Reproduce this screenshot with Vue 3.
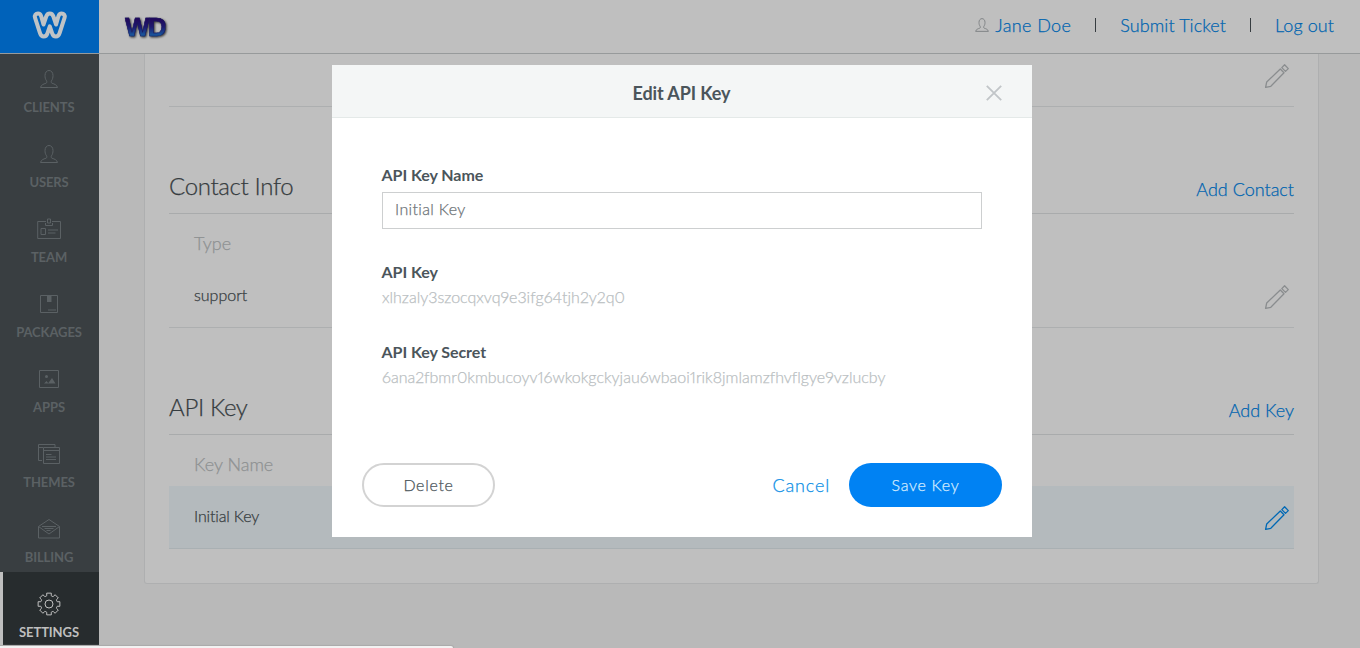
<script setup>
import { ref } from 'vue'

const keyName = ref('Initial Key')

const gear = Array.from({ length: 8 }, (_, i) => {
  const at = (r, deg) => {
    const a = ((i * 45 + deg) * Math.PI) / 180
    return `${(12 + r * Math.sin(a)).toFixed(2)} ${(12 - r * Math.cos(a)).toFixed(2)}`
  }
  return `${i ? 'L' : 'M'}${at(8.6, -15)}L${at(11.1, -12)}L${at(11.1, 12)}L${at(8.6, 15)}A2.6 2.6 0 0 0 ${at(8.6, 30)}`
}).join('') + 'Z'

const person =
  'M3.5 20.5h17c-.5-2.500-3-3.500-5.400-4.200-1-.4-1.200-1.500-.6-2.500C15.700 12 16 10.500 16 8.500c0-3-1.700-5-4-5S8 5.500 8 8.500c0 2 .3 3.500 1.500 5.300.6 1 .4 2.100-.6 2.500-2.400.7-4.900 1.700-5.400 4.200z'

const items = [
  { label: 'CLIENTS', paths: [person] },
  { label: 'USERS', paths: [person] },
  {
    label: 'TEAM',
    paths: [
      'M9 4.500H.7v17h22.800v-17H15M10.500 2h3v4h-3zM8.500 6v2.500h7V6M4 11.500h4.500v6H4zM11 13h10M11 16h7.500',
    ],
  },
  { label: 'PACKAGES', paths: ['M3.500 3.500h17v17h-17zM11 18h8'], fill: 'M10 3.500h4.500V10H10z' },
  {
    label: 'APPS',
    paths: ['M2.500 3.500h19v17h-19z'],
    fill: 'M7 16.500l2.500-2.500 2 2.500zM11 16.500l4-5.500 3.500 5.500zM8 9.500a1.500 1.500 0 1 0 3 0a1.500 1.500 0 1 0-3 0z',
  },
  {
    label: 'THEMES',
    paths: ['M5 18.500H1.500v-16h16.500V5M1.500 5.500H6M6.500 5.500h16v16h-16zM6.500 8.500h16M9 12.500h5.500M9 15h10M9 17.500h10'],
  },
  {
    label: 'BILLING',
    paths: ['M1.500 9.500L12 2.500l10.500 7V21h-21zM1.500 9.500L12 17l10.500-7.500M5 9.500h14M7.500 11.500h9M9.500 13.500h4'],
  },
  { label: 'SETTINGS', active: true, paths: [gear, 'M8 12a4 4 0 1 0 8 0a4 4 0 1 0-8 0z'] },
]

const pencil =
  'M.6 23.400L1.700 18 15.300 5 19 8.800 5.800 22.300zM16.800 3.600L19.600.7l3.700 3.900-2.800 2.800z'
</script>

<template>
  <div class="app">
    <header class="top">
      <div class="brand">
        <svg width="38" height="30" viewBox="0 0 38 30">
          <path
            d="M18.800 3.500c-2 0-3 1.200-3.600 3l-2.700 8-2.300-8.200C9.600 4.500 8.700 3.500 7 3.500c-2.300 0-3.700 1.900-3 4.100l5 15.600c.7 2.200 1.800 3.300 3.700 3.300s3.100-1.100 3.700-3.100l2.400-7 2.400 7c.6 2 1.800 3.100 3.700 3.100s3-1.100 3.700-3.300l5-15.600c.7-2.200-.7-4.100-3-4.100-1.700 0-2.600 1-3.200 2.800l-2.300 8.200-2.700-8c-.6-1.800-1.600-3-3.600-3z"
          />
        </svg>
      </div>
      <div class="wd">WD</div>
      <div class="links">
        <svg class="me" width="18" height="18" viewBox="0 0 24 24"><path :d="person" /></svg>
        <a class="jane">Jane Doe</a>
        <i class="bar"></i>
        <a>Submit Ticket</a>
        <i class="bar"></i>
        <a>Log out</a>
      </div>
    </header>

    <div class="body">
      <nav class="side">
        <div v-for="it in items" :key="it.label" class="item" :class="{ active: it.active }">
          <svg width="24" height="24" viewBox="0 0 24 24">
            <path v-for="p in it.paths" :key="p" :d="p" />
            <path v-if="it.fill" class="solid" :d="it.fill" />
          </svg>
          <span>{{ it.label }}</span>
        </div>
      </nav>

      <main class="main">
        <div class="card">
          <div class="row first">
            <svg class="pen" width="24" height="24" viewBox="0 0 24 24"><path :d="pencil" /></svg>
          </div>
          <div class="section">
            <h2>Contact Info</h2>
            <a>Add Contact</a>
          </div>
          <div class="thead"><span>Type</span></div>
          <div class="row">
            <span>support</span>
            <svg class="pen" width="24" height="24" viewBox="0 0 24 24"><path :d="pencil" /></svg>
          </div>
          <div class="section">
            <h2>API Key</h2>
            <a>Add Key</a>
          </div>
          <div class="thead"><span>Key Name</span></div>
          <div class="row hot">
            <span>Initial Key</span>
            <svg class="pen" width="24" height="24" viewBox="0 0 24 24"><path :d="pencil" /></svg>
          </div>
        </div>
      </main>
    </div>

    <div class="status"></div>

    <section class="modal">
      <div class="modal-head">
        <h3>Edit API Key</h3>
        <svg class="close" width="16" height="16" viewBox="0 0 16 16"><path d="M.8.800l14.400 14.400M15.200.8L.8 15.200" /></svg>
      </div>
      <div class="modal-body">
        <label>API Key Name</label>
        <input v-model="keyName" type="text" />
        <label>API Key</label>
        <p>xlhzaly3szocqxvq9e3ifg64tjh2y2q0</p>
        <label>API Key Secret</label>
        <p>6ana2fbmr0kmbucoyv16wkokgckyjau6wbaoi1rik8jmlamzfhvflgye9vzlucby</p>
      </div>
      <div class="modal-foot">
        <button class="delete">Delete</button>
        <a class="cancel">Cancel</a>
        <button class="save">Save Key</button>
      </div>
    </section>
  </div>
</template>

<style>
body {
  margin: 0;
  overflow: hidden;
}
</style>

<style scoped>
* {
  box-sizing: border-box;
}
.app {
  position: relative;
  width: 1360px;
  height: 648px;
  overflow: hidden;
  background: #b9b9b9;
  color: #363c40;
  font-family: Lato, 'Open Sans', sans-serif;
  font-weight: 300;
  font-variant-ligatures: none;
  font-variant-numeric: proportional-nums;
  -webkit-text-stroke: 0.250px currentColor;
  white-space: nowrap;
}
svg {
  display: block;
  flex: none;
  fill: none;
  overflow: visible;
}
.top {
  position: relative;
  z-index: 1;
  display: flex;
  align-items: center;
  height: 54px;
  background: #bfbfbf;
  border-bottom: 1px solid #979a9b;
}
.brand {
  display: flex;
  justify-content: center;
  width: 99px;
  height: 53px;
  padding-top: 10px;
  background: #0062ba;
}
.brand svg {
  margin-left: 1px;
}
.brand path {
  stroke: #bfc3c6;
  stroke-width: 4;
  stroke-linejoin: round;
}
.wd {
  margin-left: 26px;
  font: bold 26px/30px 'Liberation Sans', sans-serif;
  letter-spacing: -1.500px;
  color: transparent;
  background: linear-gradient(#210a5c 25%, #1e1a70 50%, #1668a8 85%);
  background-clip: text;
  -webkit-text-stroke: 0.500px #1a1560;
  filter: drop-shadow(1px 1px 1px #333);
}
.links {
  display: flex;
  align-items: center;
  margin-left: auto;
  margin-right: 26px;
  margin-bottom: 4px;
  height: 24px;
  font-size: 18px;
  line-height: 24px;
  letter-spacing: 0.080px;
  color: #0064b0;
}
.jane {
  letter-spacing: 0.400px;
}
.me path {
  stroke: #7f8385;
  stroke-width: 1.300;
}
.me {
  margin-right: 4px;
}
.bar {
  width: 1px;
  height: 14px;
  margin: 0 24px;
  background: #363c40;
}
.body {
  display: flex;
  height: 594px;
}
.side {
  width: 99px;
  height: 598px;
  margin-top: -7px;
  background: #393e41;
}
.item {
  display: flex;
  flex-direction: column;
  align-items: center;
  height: 75px;
  padding: 20px 1px 0 0;
  color: #5b6164;
}
.item svg {
  margin-left: -1px;
}
.item path {
  stroke: #5b6164;
  stroke-width: 1;
}
.item .solid {
  fill: #5b6164;
  stroke: none;
}
.item span {
  margin-top: 8px;
  font-size: 13px;
  line-height: 16px;
  font-weight: 700;
  letter-spacing: -0.100px;
  -webkit-text-stroke: 0;
}
.item.active {
  height: 73px;
  background: #272c2e;
  border-left: 3px solid #bfbfbf;
  padding-right: 4px;
  color: #bfbfbf;
}
.item.active path {
  stroke: #bfbfbf;
}
.main {
  flex: 1;
  padding: 0 41px 0 45px;
}
.card {
  height: 530px;
  padding: 0 24px;
  background: #bfbfbf;
  border: 1px solid #aeafb0;
  border-top: 0;
  border-radius: 0 0 3px 3px;
}
.row {
  display: flex;
  align-items: center;
  justify-content: space-between;
  height: 63px;
  padding: 1px 5px 0 25px;
  border-bottom: 1px solid #adafb0;
  font-size: 16px;
}
.row span {
  margin-bottom: 4px;
}
.hot span {
  letter-spacing: -0.150px;
}
.row.first {
  height: 53px;
  padding-bottom: 9px;
}
.first .pen {
  margin-left: auto;
}
.row.hot {
  background: #b4babd;
  border-color: #a9b0b3;
}
.pen path {
  stroke: #8a8d8f;
  stroke-width: 1.300;
  stroke-linejoin: round;
}
.hot .pen path {
  stroke: #0069b5;
}
.section {
  display: flex;
  align-items: flex-end;
  justify-content: space-between;
  height: 107px;
  border-bottom: 1px solid #a9abac;
}
h2 {
  margin: 0 0 12px;
  font-size: 24px;
  line-height: 30px;
  font-weight: 300;
  letter-spacing: -0.350px;
}
.section a {
  margin-bottom: 12px;
  font-size: 18px;
  line-height: 24px;
  color: #0064b0;
}
.thead {
  height: 51px;
  padding: 17px 25px 0;
  font-size: 18px;
  line-height: 24px;
  color: #8e9192;
}
.status {
  position: absolute;
  left: 0;
  bottom: 0;
  width: 453px;
  height: 2px;
  background: #f2f2f2;
  border-top-right-radius: 2px;
  box-shadow: 0 0 1px 1px #aaa;
}
.modal {
  position: absolute;
  z-index: 2;
  left: 332px;
  top: 65px;
  display: flex;
  flex-direction: column;
  width: 700px;
  height: 472px;
  background: #fff;
  color: #4b555b;
}
.modal-head {
  display: flex;
  align-items: center;
  height: 53px;
  padding: 4px 30px 0;
  background: #f4f6f6;
  border-bottom: 1px solid #e4e9e8;
}
h3 {
  flex: 1;
  margin: 0 -15px 0 0;
  text-align: center;
  font-size: 18px;
  line-height: 24px;
  font-weight: 700;
  letter-spacing: -0.100px;
  -webkit-text-stroke: 0;
}
.close path {
  stroke: #c1c5c8;
  stroke-width: 1.800;
}
.modal-body {
  display: flex;
  flex-direction: column;
  align-items: flex-start;
  padding: 47px 50px 0;
}
label {
  margin-left: -0.500px;
  font-size: 16px;
  line-height: 20px;
  font-weight: 700;
  letter-spacing: -0.060px;
  -webkit-text-stroke: 0;
}
input {
  width: 600px;
  height: 37px;
  margin: 7px 0 33px;
  padding: 0 12px 4px;
  border: 1px solid #cdcfd0;
  background: #fff;
  font: 300 16px Lato, sans-serif;
  font-variant-ligatures: none;
  letter-spacing: 0.350px;
  color: #6b7276;
}
p {
  margin: 5px 0 35px;
  font-size: 16px;
  line-height: 20px;
  color: #b9bec1;
}
.modal-foot {
  display: flex;
  align-items: center;
  margin-top: auto;
  padding: 0 30px 30px;
}
button {
  padding: 0;
  font: 300 16px/38px Lato, sans-serif;
  letter-spacing: 0.700px;
}
.delete {
  width: 133px;
  height: 44px;
  border: 2px solid #d3d3d3;
  border-radius: 22px;
  background: #fff;
  color: #4b555b;
}
.cancel {
  margin: 0 19px 1px auto;
  font-size: 18px;
  line-height: 24px;
  letter-spacing: 0.850px;
  color: #0d8fe6;
}
.save {
  width: 153px;
  height: 44px;
  border: 0;
  border-radius: 22px;
  background: #0082f3;
  color: #d5ecff;
}
</style>
